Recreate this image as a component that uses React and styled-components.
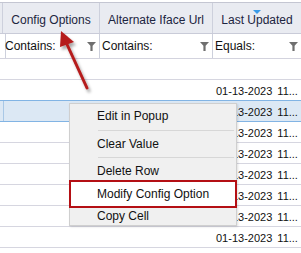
import React from "react";
import styled, { createGlobalStyle } from "styled-components";

const Global = createGlobalStyle`
  html, body { margin: 0; padding: 0; background: #ffffff; }
  body { font-family: "Liberation Sans", Arial, sans-serif; font-size: 12px; color: #1a1a1a; }
`;

const Page = styled.div`
  position: relative;
  width: 301px;
  height: 253px;
  overflow: hidden;
  background: #ffffff;
  padding-top: 2px;
  box-sizing: border-box;
`;

const COLS = "3px 97px 113px 88px";

const HeaderRow = styled.div`
  display: grid;
  grid-template-columns: ${COLS};
  height: 30px;
  background: #e9ebf1;
  border-top: 1px solid #c4c6d2;
  border-bottom: 1px solid #c9cbd8;
`;

const HeaderCell = styled.div`
  position: relative;
  display: flex;
  align-items: center;
  justify-content: center;
  border-right: 1px solid #cdd0dc;
  color: #1c2440;
  white-space: nowrap;
  overflow: hidden;
  padding-top: 3px;
  &:last-child { border-right: none; }
`;

const SortMark = styled.span`
  position: absolute;
  top: 7px;
  left: 50%;
  margin-left: -4px;
  width: 0;
  height: 0;
  border-left: 4px solid transparent;
  border-right: 4px solid transparent;
  border-top: 4px solid #3a9be8;
`;

const FilterRow = styled.div`
  display: grid;
  grid-template-columns: ${COLS};
  height: 24px;
  background: #ffffff;
  border-bottom: 1px solid #d3d3de;
`;

const FilterCell = styled.div`
  display: flex;
  align-items: center;
  justify-content: space-between;
  padding: 0 3px 0 2px;
  border-right: 1px solid #cdd0dc;
  color: #111;
  white-space: nowrap;
  &:last-child { border-right: none; }
`;

const Funnel = () => (
  <svg width="9" height="9" viewBox="0 0 9 9">
    <path d="M0 0 H9 L5.6 3.8 V9 H3.4 V3.8 Z" fill="#6f6f6f" />
  </svg>
);

const DataRow = styled.div`
  display: grid;
  grid-template-columns: ${COLS};
  height: 20px;
  border-bottom: 1px solid ${(p) => (p.$selected ? "#82b4e4" : "#d6d6e0")};
  background: ${(p) => (p.$selected ? "#dce8f4" : "#ffffff")};
  ${(p) => p.$selected && "margin-top: -1px; border-top: 1px solid #82b4e4;"}
`;

const DataCell = styled.div`
  display: flex;
  align-items: center;
  padding: 0 0 0 3px;
  overflow: hidden;
  white-space: nowrap;
  color: #111;
  border-right: 1px solid ${(p) => (p.$divider ? "#a9c8e6" : "transparent")};
`;

const DateText = styled.span`
  font-size: 11px;
  word-spacing: 2px;
  padding-top: 1px;
`;

const Menu = styled.div`
  position: absolute;
  left: 69px;
  top: 103px;
  width: 168px;
  background: #f0f0f0;
  border: 1px solid #cfcfcf;
  box-shadow: 1px 1px 2px rgba(0, 0, 0, 0.12);
  display: flex;
  flex-direction: column;
  padding: 0;
  box-sizing: border-box;
`;

const MenuItem = styled.div`
  height: ${(p) => p.$h || 22}px;
  display: flex;
  align-items: center;
  padding-left: 27px;
  color: #111;
  white-space: nowrap;
`;

const HighlightItem = styled(MenuItem)`
  margin: -2px -1px -2px -1px;
  border: 2px solid #b40f14;
  background: #ffffff;
  padding-left: 26px;
  box-sizing: border-box;
`;

const Separator = styled.div`
  height: 1px;
  background: #d7d7d7;
  margin: 2px 2px 2px 28px;
`;

const Arrow = styled.svg`
  position: absolute;
  left: 0;
  top: 0;
  pointer-events: none;
`;

const DATE = "01-13-2023 11...";
const rows = [
  { date: "" },
  { date: DATE },
  { date: DATE, selected: true },
  { date: DATE },
  { date: DATE },
  { date: DATE },
  { date: DATE },
  { date: DATE },
  { date: DATE },
  { date: "" },
];

export default function App() {
  return (
    <>
      <Global />
      <Page>
        <HeaderRow>
          <HeaderCell />
          <HeaderCell>Config Options</HeaderCell>
          <HeaderCell>Alternate Iface Url</HeaderCell>
          <HeaderCell>
            <SortMark />
            Last Updated
          </HeaderCell>
        </HeaderRow>
        <FilterRow>
          <FilterCell />
          <FilterCell>
            Contains:
            <Funnel />
          </FilterCell>
          <FilterCell>
            Contains:
            <Funnel />
          </FilterCell>
          <FilterCell>
            Equals:
            <Funnel />
          </FilterCell>
        </FilterRow>
        {rows.map((r, i) => (
          <DataRow key={i} $selected={r.selected}>
            <DataCell $divider={r.selected} />
            <DataCell />
            <DataCell />
            <DataCell>
              <DateText>{r.date}</DateText>
            </DataCell>
          </DataRow>
        ))}
        <Menu>
          <MenuItem $h={24}>Edit in Popup</MenuItem>
          <Separator />
          <MenuItem $h={22}>Clear Value</MenuItem>
          <Separator />
          <MenuItem $h={22}>Delete Row</MenuItem>
          <HighlightItem $h={28}>Modify Config Option</HighlightItem>
          <MenuItem $h={19}>Copy Cell</MenuItem>
        </Menu>
        <Arrow width="301" height="253" viewBox="0 0 301 253">
          <defs>
            <filter id="sh" x="-50%" y="-50%" width="200%" height="200%">
              <feDropShadow dx="2" dy="3" stdDeviation="1.5" floodColor="#000" floodOpacity="0.35" />
            </filter>
          </defs>
          <g filter="url(#sh)">
            <line x1="87" y1="88" x2="65" y2="40" stroke="#b51c1c" strokeWidth="3" strokeLinecap="round" />
            <polygon points="61,31 74,42 60,47" fill="#b51c1c" />
          </g>
        </Arrow>
      </Page>
    </>
  );
}
